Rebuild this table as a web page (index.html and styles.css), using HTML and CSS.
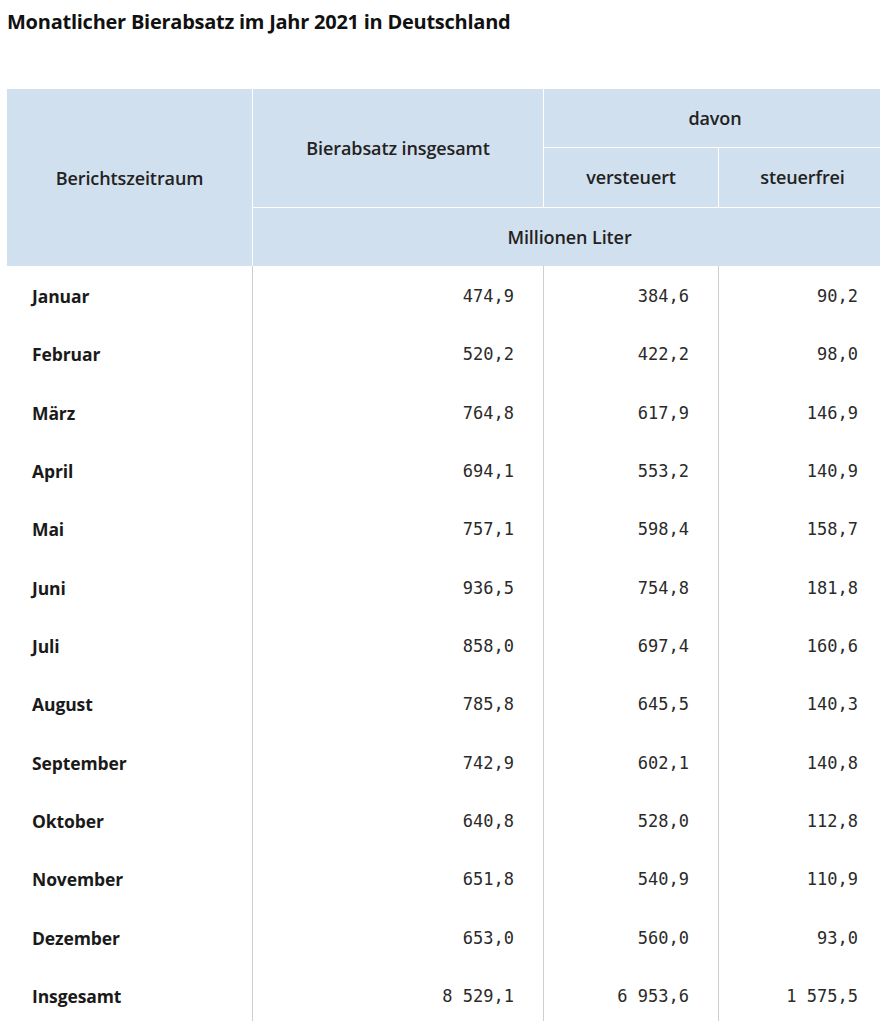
FILE: index.html
```html
<!DOCTYPE html>
<html lang="de">
<head>
<meta charset="utf-8">
<title>Monatlicher Bierabsatz</title>
<link rel="stylesheet" href="styles.css">
</head>
<body>
<div class="page">
  <h1 class="title">Monatlicher Bierabsatz im Jahr 2021 in Deutschland</h1>
  <table class="data">
    <colgroup>
      <col class="c1"><col class="c2"><col class="c3"><col class="c4">
    </colgroup>
    <thead>
      <tr>
        <th rowspan="3">Berichtszeitraum</th>
        <th rowspan="2" class="sep">Bierabsatz insgesamt</th>
        <th colspan="2" class="sep">davon</th>
      </tr>
      <tr>
        <th class="sep top">versteuert</th>
        <th class="sep top">steuerfrei</th>
      </tr>
      <tr>
        <th colspan="3" class="sep top">Millionen Liter</th>
      </tr>
    </thead>
    <tbody>
      <tr><td class="label">Januar</td><td class="num">474,9</td><td class="num">384,6</td><td class="num">90,2</td></tr>
      <tr><td class="label">Februar</td><td class="num">520,2</td><td class="num">422,2</td><td class="num">98,0</td></tr>
      <tr><td class="label">März</td><td class="num">764,8</td><td class="num">617,9</td><td class="num">146,9</td></tr>
      <tr><td class="label">April</td><td class="num">694,1</td><td class="num">553,2</td><td class="num">140,9</td></tr>
      <tr><td class="label">Mai</td><td class="num">757,1</td><td class="num">598,4</td><td class="num">158,7</td></tr>
      <tr><td class="label">Juni</td><td class="num">936,5</td><td class="num">754,8</td><td class="num">181,8</td></tr>
      <tr><td class="label">Juli</td><td class="num">858,0</td><td class="num">697,4</td><td class="num">160,6</td></tr>
      <tr><td class="label">August</td><td class="num">785,8</td><td class="num">645,5</td><td class="num">140,3</td></tr>
      <tr><td class="label">September</td><td class="num">742,9</td><td class="num">602,1</td><td class="num">140,8</td></tr>
      <tr><td class="label">Oktober</td><td class="num">640,8</td><td class="num">528,0</td><td class="num">112,8</td></tr>
      <tr><td class="label">November</td><td class="num">651,8</td><td class="num">540,9</td><td class="num">110,9</td></tr>
      <tr><td class="label">Dezember</td><td class="num">653,0</td><td class="num">560,0</td><td class="num">93,0</td></tr>
      <tr><td class="label">Insgesamt</td><td class="num">8 529,1</td><td class="num">6 953,6</td><td class="num">1 575,5</td></tr>
    </tbody>
  </table>
</div>
</body>
</html>
```

FILE: styles.css
```css
html {
  overflow: hidden;
}
body {
  margin: 0;
  background: #ffffff;
  color: #1a1a1a;
  font-family: "Open Sans", "Noto Sans", sans-serif;
}
.page {
  padding: 10px 0 0 7px;
  width: 879px;
}
.title {
  margin: 0 0 55px 0;
  font-size: 20px;
  line-height: 24px;
  font-weight: 700;
  color: #111;
  letter-spacing: -0.25px;
}
.data {
  width: 879px;
  border-collapse: separate;
  border-spacing: 0;
  table-layout: fixed;
}
.c1 { width: 245px; }
.c2 { width: 291px; }
.c3 { width: 175px; }
.c4 { width: 168px; }

.data thead th {
  background: #d1e0ee;
  font-size: 18px;
  font-weight: 600;
  color: #222;
  height: 58px;
  padding: 0;
  text-align: center;
  vertical-align: middle;
  letter-spacing: -0.1px;
}
.data thead th.sep {
  border-left: 1px solid #ffffff;
}
.data thead th.top {
  border-top: 1px solid #ffffff;
  height: 58.5px;
}
.data tbody td {
  height: 58.33px;
  padding: 0;
  vertical-align: middle;
}
.data tbody tr:first-child td {
  padding-top: 1px;
}
.data tbody td.label {
  padding-left: 25px;
  font-size: 17.5px;
  font-weight: 700;
  color: #1a1a1a;
  letter-spacing: -0.1px;
}
.data tbody td.num {
  border-left: 1px solid #cfcfcf;
  text-align: right;
  padding-right: 29px;
  font-family: "DejaVu Sans Mono", "Liberation Mono", monospace;
  font-size: 17px;
  color: #2a2a2a;
}
.data tbody td.num:last-child {
  padding-right: 28px;
}
```
